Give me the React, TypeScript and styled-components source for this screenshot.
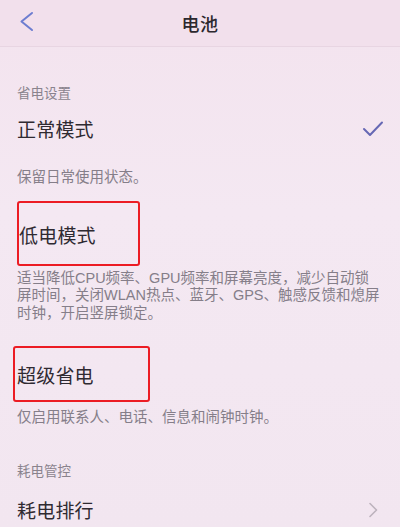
import React from "react";
import styled, { createGlobalStyle } from "styled-components";

const Global = createGlobalStyle`
  html, body { margin: 0; padding: 0; }
  body {
    background: #f4e7f1;
    font-family: "Noto Sans CJK SC", "Noto Sans", sans-serif;
    color: #2f2a31;
    overflow: hidden;
  }
`;

const Page = styled.div`
  width: 400px;
  height: 527px;
  background: linear-gradient(180deg, #f3e3ee 0%, #f4e8f2 40%, #f2e6f0 100%);
  display: flex;
  flex-direction: column;
`;

const Header = styled.div`
  height: 46px;
  flex: none;
  position: relative;
  display: flex;
  align-items: center;
  justify-content: center;
  border-bottom: 1px solid rgba(120, 90, 110, 0.08);
  background: #f2e0ec;
`;

const Back = styled.svg`
  position: absolute;
  left: 18px;
  top: 10px;
`;

const Title = styled.div`
  font-size: 18px;
  font-weight: 500;
  color: #2c282e;
  letter-spacing: 0.5px;
`;

const Content = styled.div`
  padding: 0 17px;
  display: flex;
  flex-direction: column;
`;

const SectionLabel = styled.div<{ $top: number }>`
  margin-top: ${(p) => p.$top}px;
  font-size: 13.5px;
  line-height: 18px;
  color: #8a838d;
`;

const Row = styled.div<{ $top: number }>`
  margin-top: ${(p) => p.$top}px;
  height: 28px;
  display: flex;
  align-items: center;
  justify-content: space-between;
  position: relative;
`;

const RowTitle = styled.div<{ $indent?: number }>`
  margin-left: ${(p) => p.$indent ?? 0}px;
  font-size: 19px;
  line-height: 28px;
  color: #2f2a31;
  letter-spacing: 0.2px;
`;

const Desc = styled.div<{ $top: number }>`
  margin-top: ${(p) => p.$top}px;
  display: flex;
  flex-direction: column;
  font-family: "Liberation Sans", "Noto Sans CJK SC", sans-serif;
  font-size: 14.5px;
  color: #857e89;
  white-space: nowrap;
`;

const DescLine = styled.div`
  height: 17.5px;
  line-height: 17.5px;
`;

const Highlight = styled.div<{ $l: number; $t: number; $w: number; $h: number }>`
  position: absolute;
  left: ${(p) => p.$l}px;
  top: ${(p) => p.$t}px;
  width: ${(p) => p.$w}px;
  height: ${(p) => p.$h}px;
  box-sizing: border-box;
  border: 2px solid #ec1c24;
  border-radius: 3px;
  pointer-events: none;
`;

const Icon = styled.svg<{ $right: number }>`
  flex: none;
  margin-right: ${(p) => p.$right}px;
`;

export default function App() {
  return (
    <>
      <Global />
      <Page>
        <Header>
          <Back width="18" height="24" viewBox="0 0 18 24">
            <path d="M14 3 L3.5 11.5 L14 20" fill="none" stroke="#6d7dd0" strokeWidth="2" strokeLinecap="round" strokeLinejoin="round" />
          </Back>
          <Title>电池</Title>
        </Header>
        <Content>
          <SectionLabel $top={36}>省电设置</SectionLabel>
          <Row $top={14}>
            <RowTitle>正常模式</RowTitle>
            <Icon $right={-1} width="22" height="18" viewBox="0 0 22 18">
              <path d="M2 9 L8 15 L20 2.5" fill="none" stroke="#6668b4" strokeWidth="2" strokeLinecap="round" strokeLinejoin="round" />
            </Icon>
          </Row>
          <Desc $top={26}>
            <DescLine>保留日常使用状态。</DescLine>
          </Desc>

          <Row $top={34}>
            <RowTitle $indent={2}>低电模式</RowTitle>
            <Highlight $l={0} $t={-20} $w={123} $h={65} />
          </Row>
          <Desc $top={21}>
            <DescLine>适当降低CPU频率、GPU频率和屏幕亮度，减少自动锁</DescLine>
            <DescLine>屏时间，关闭WLAN热点、蓝牙、GPS、触感反馈和熄屏</DescLine>
            <DescLine>时钟，开启竖屏锁定。</DescLine>
          </Desc>

          <Row $top={39}>
            <RowTitle>超级省电</RowTitle>
            <Highlight $l={-4} $t={-15} $w={137} $h={56} />
          </Row>
          <Desc $top={20}>
            <DescLine>仅启用联系人、电话、信息和闹钟时钟。</DescLine>
          </Desc>

          <SectionLabel $top={34}>耗电管控</SectionLabel>
          <Row $top={17}>
            <RowTitle>耗电排行</RowTitle>
            <Icon $right={4} width="12" height="18" viewBox="0 0 12 18">
              <path d="M3 2.5 L9.5 9 L3 15.5" fill="none" stroke="#bdb3bd" strokeWidth="1.6" strokeLinecap="round" strokeLinejoin="round" />
            </Icon>
          </Row>
        </Content>
      </Page>
    </>
  );
}
